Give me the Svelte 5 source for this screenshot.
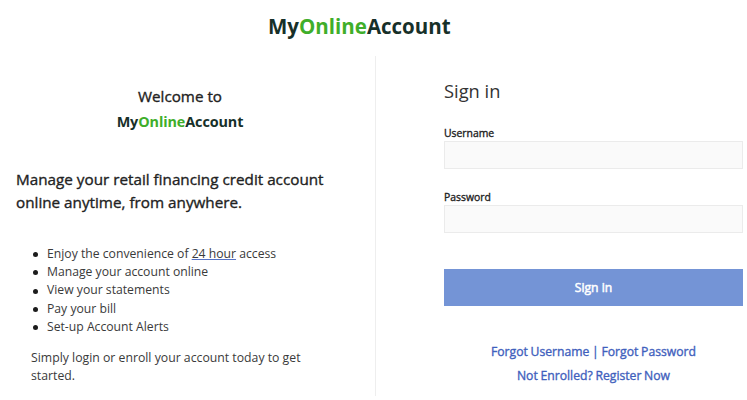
<script lang="ts">
	const features = [
		'Manage your account online',
		'View your statements',
		'Pay your bill',
		'Set-up Account Alerts'
	];

	let username = '';
	let password = '';
</script>

<header>
	<div class="logo">My<span>Online</span>Account</div>
</header>
<main>
	<section class="intro">
		<div class="welcome">Welcome to</div>
		<div class="logo small">My<span>Online</span>Account</div>
		<h2>Manage your retail financing credit account<br />online anytime, from anywhere.</h2>
		<ul>
			<li>Enjoy the convenience of <u>24 hour</u> access</li>
			{#each features as feature}
				<li>{feature}</li>
			{/each}
		</ul>
		<p>Simply login or enroll your account today to get<br />started.</p>
	</section>
	<form on:submit|preventDefault>
		<h1>Sign in</h1>
		<label for="username">Username</label>
		<input id="username" type="text" bind:value={username} />
		<label for="password">Password</label>
		<input id="password" type="password" bind:value={password} />
		<button type="submit">Sign in</button>
		<nav>
			<div><a href="#username">Forgot Username</a> | <a href="#password">Forgot Password</a></div>
			<div><a href="#register">Not Enrolled? Register Now</a></div>
		</nav>
	</form>
</main>

<style>
	:global(body) {
		background: #fff;
		color: #222;
		font-family: 'Open Sans', sans-serif;
		overflow: hidden;
	}

	header {
		height: 56px;
		box-sizing: border-box;
		padding: 11px 0 0 268px;
	}

	.logo {
		font-size: 20.5px;
		line-height: 30px;
		font-weight: 700;
		color: #173029;
		white-space: nowrap;
	}

	.logo span {
		color: #3fae2a;
	}

	.logo.small {
		font-size: 14.4px;
		line-height: 20px;
		text-align: center;
		margin-top: 5px;
		letter-spacing: -0.1px;
	}

	main {
		display: flex;
		height: 340px;
	}

	.intro {
		box-sizing: border-box;
		width: 376px;
		padding: 30px 31px 0 16px;
		border-right: 1px solid #eee;
	}

	.welcome,
	h2,
	label,
	button,
	nav {
		font-weight: 400;
		-webkit-text-stroke: 0.35px currentColor;
	}

	.welcome {
		font-size: 15.2px;
		line-height: 21px;
		text-align: center;
	}

	h2 {
		margin: 36px 0 0;
		font-size: 15.25px;
		line-height: 23px;
		white-space: nowrap;
	}

	ul {
		margin: 31px 0 0;
		padding: 0 0 0 17px;
		font-size: 12.2px;
		line-height: 18.2px;
		color: #3a3a3a;
		list-style: none;
	}

	li {
		display: flex;
		align-items: center;
		white-space: pre;
	}

	li::before {
		content: '';
		width: 5px;
		height: 5px;
		margin: 1px 9px 0 0;
		border-radius: 50%;
		background: #1c1c1c;
	}

	u {
		text-decoration-color: #5673c4;
	}

	p {
		margin: 13px 0 0 15px;
		font-size: 12.25px;
		line-height: 18px;
		color: #3a3a3a;
		white-space: nowrap;
	}

	form {
		display: flex;
		flex-direction: column;
		width: 299px;
		margin-left: 68px;
		padding-top: 21px;
	}

	h1 {
		margin: 0 0 21px;
		font-size: 18.3px;
		line-height: 28px;
		font-weight: 400;
		color: #333;
	}

	label {
		font-size: 10.4px;
		line-height: 14px;
	}

	input {
		box-sizing: border-box;
		height: 28px;
		margin: 1px 0 21px;
		border: 1px solid #ebebeb;
		background: #fafafa;
	}

	button {
		height: 37px;
		margin-top: 15px;
		border: none;
		background: #7494d6;
		color: #fff;
		font-family: 'Open Sans', sans-serif;
		font-size: 12.2px;
		-webkit-text-stroke-width: 0.5px;
	}

	nav {
		margin-top: 34px;
		font-size: 12.2px;
		line-height: 24.4px;
		text-align: center;
		color: #3f5fbd;
	}

	nav div {
		word-spacing: -0.5px;
	}

	a {
		color: inherit;
		text-decoration: none;
	}
</style>
